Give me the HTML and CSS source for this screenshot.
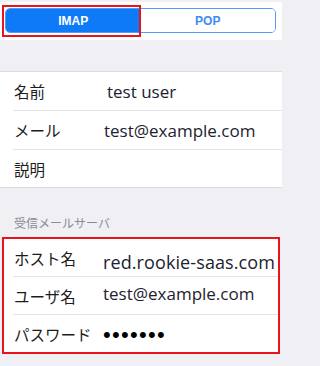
FILE: index.html
```html
<!DOCTYPE html>
<html lang="ja">
<head>
<meta charset="utf-8">
<link rel="stylesheet" href="styles.css">
</head>
<body>
<div class="top">
  <div class="seg">
    <div class="seg-item active">IMAP</div>
    <div class="seg-item">POP</div>
  </div>
  <div class="mark mark-imap"></div>
</div>

<div class="gap"></div>

<section class="group">
  <div class="row"><span class="label">名前</span><span class="value indent">test user</span></div>
  <div class="row"><span class="label">メール</span><span class="value">test@example.com</span></div>
  <div class="row last"><span class="label">説明</span><span class="value"></span></div>
</section>

<div class="group-header">受信メールサーバ</div>

<section class="group boxed">
  <div class="row"><span class="label">ホスト名</span><span class="value host">red.rookie-saas.com</span></div>
  <div class="row"><span class="label">ユーザ名</span><span class="value up">test@example.com</span></div>
  <div class="row last"><span class="label">パスワード</span><span class="value dots">•••••••</span></div>
</section>
</body>
</html>
```
FILE: styles.css
```css
* { box-sizing: border-box; }
html, body {
  margin: 0;
  padding: 0;
}
html {
  background: #efeff4;
}
body {
  max-width: 282px;
  min-height: 366px;
  overflow: hidden;
  background: #efeff4;
  font-family: "Noto Sans CJK JP", "Noto Sans", sans-serif;
  color: #1f1f1f;
}
.top {
  position: relative;
  margin-top: 2px;
  height: 38px;
  background: #fff;
  padding: 6px 6px 0 5px;
}
.seg {
  display: flex;
  height: 25px;
  border: 1px solid #4f9bf6;
  border-radius: 5px;
  overflow: hidden;
}
.seg-item {
  flex: 1;
  display: flex;
  align-items: center;
  justify-content: center;
  font-family: "Liberation Sans", Arial, sans-serif;
  font-weight: bold;
  font-size: 12px;
  color: #3a8df5;
  background: #fff;
}
.seg-item.active {
  background: #0f7af7;
  color: #fff;
}
.mark {
  position: absolute;
  border: 2px solid #e8141c;
}
.mark-imap {
  left: 2px;
  top: 3px;
  width: 139px;
  height: 32px;
}
.gap {
  height: 31px;
}
.group {
  background: #fff;
  border-top: 1px solid #dcdce0;
  border-bottom: 1px solid #dcdce0;
}
.row {
  display: flex;
  align-items: center;
  height: 39px;
  margin-left: 13px;
  padding-left: 1px;
  border-bottom: 1px solid #e4e4e8;
}
.row.last {
  height: 37px;
  border-bottom: none;
}
.label {
  width: 90px;
  flex: none;
  font-size: 15.5px;
  color: #1c1c1c;
  white-space: nowrap;
}
.value {
  font-family: "Open Sans", "Noto Sans", sans-serif;
  font-size: 17px;
  color: #1d2230;
  white-space: nowrap;
}
.value.indent {
  margin-left: 3px;
}
.group-header {
  padding: 28px 14px 7px;
  font-size: 12px;
  line-height: 14px;
  color: #8a8a8f;
}
.group.boxed {
  margin: 0 2px;
  border: 2px solid #e8141c;
}
.group.boxed .row {
  margin-left: 9px;
  height: 38px;
}
.group.boxed .row.last {
  height: 37px;
}
.group.boxed .label {
  width: 89px;
}
.value.host {
  font-size: 18px;
  margin-top: 9px;
  letter-spacing: 0.1px;
}
.value.up {
  margin-top: -4px;
}
.value.dots {
  font-family: "Liberation Sans", Arial, sans-serif;
  font-size: 22px;
  letter-spacing: 1.3px;
  color: #000;
  margin-top: 2px;
}
```
